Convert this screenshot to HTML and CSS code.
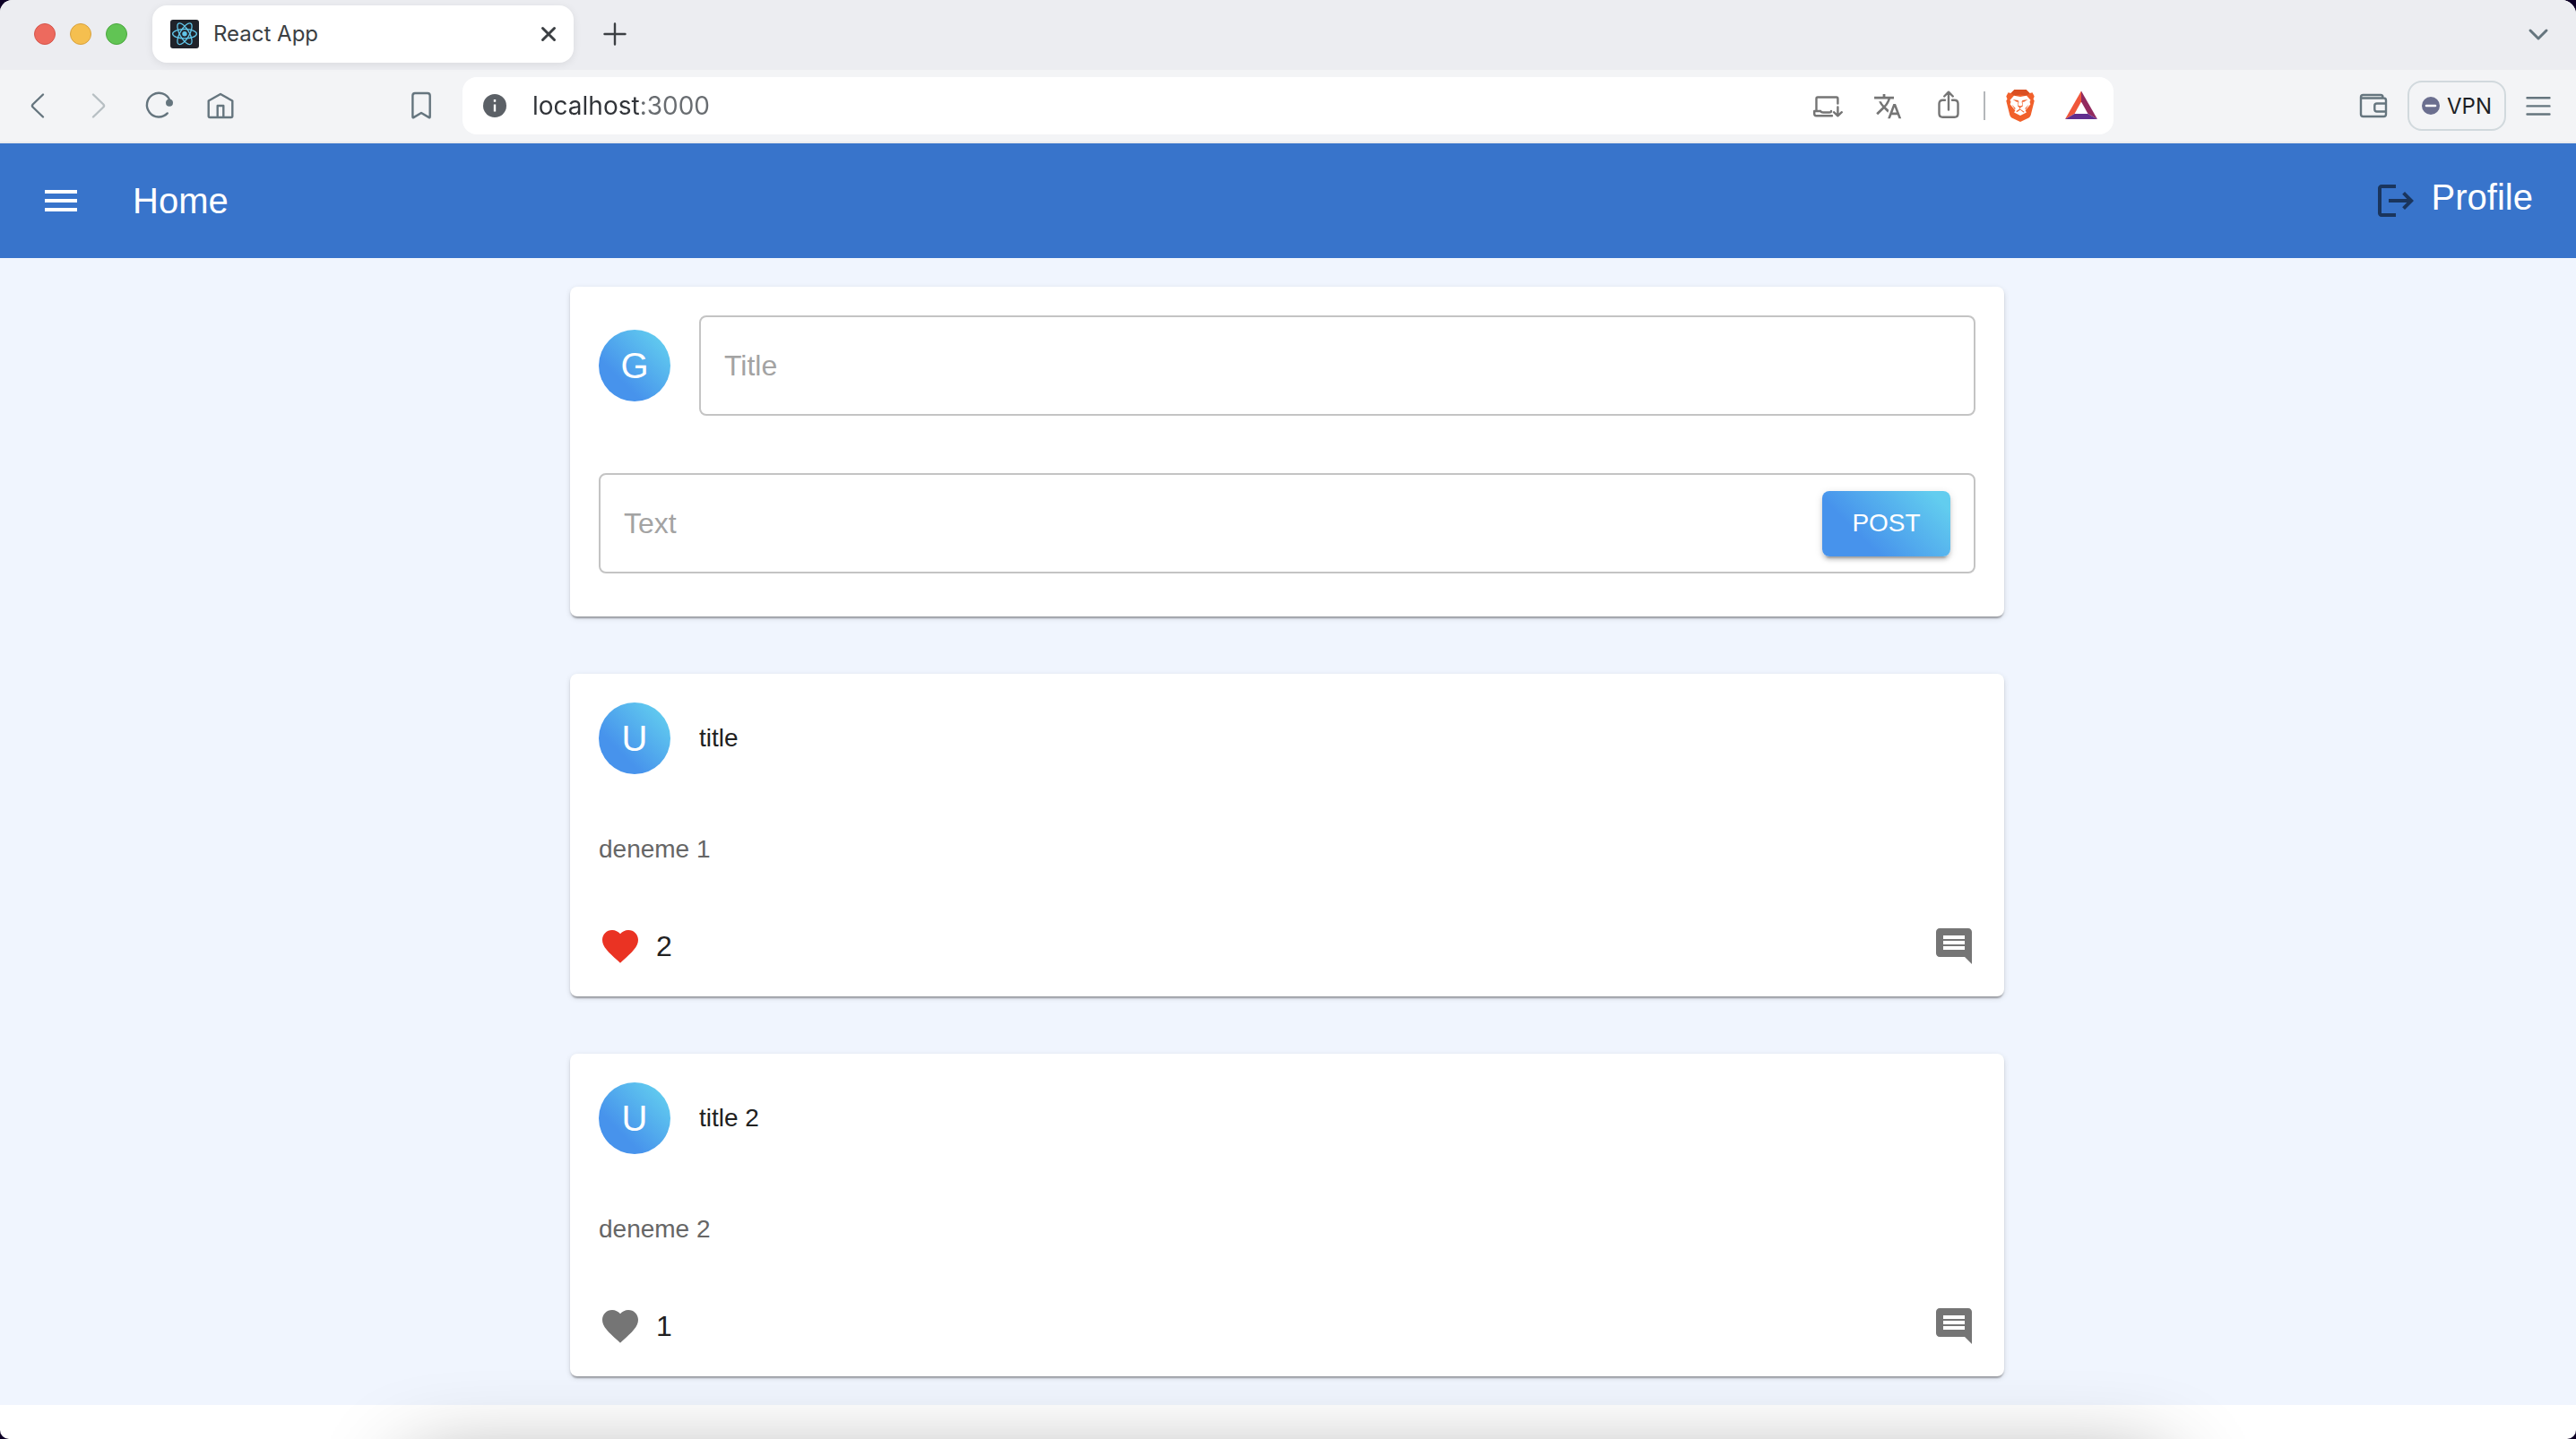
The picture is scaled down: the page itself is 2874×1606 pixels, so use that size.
FILE: index.html
```html
<!DOCTYPE html>
<html lang="en">
<head>
<meta charset="utf-8">
<title>React App</title>
<link rel="stylesheet" href="styles.css">
</head>
<body>
<div class="window">
  <div class="tab-strip">
    <div class="traffic">
      <button class="light light-close" type="button" aria-label="Close window"></button>
      <button class="light light-min" type="button" aria-label="Minimize window"></button>
      <button class="light light-max" type="button" aria-label="Zoom window"></button>
    </div>
    <div class="tab">
      <svg class="favicon" viewBox="0 0 32 32" aria-hidden="true">
        <rect width="32" height="32" rx="3" fill="#20232a"/>
        <g fill="none" stroke="#61c5e8" stroke-width="1.3">
          <ellipse cx="16" cy="15.7" rx="13.4" ry="5.2"/>
          <ellipse cx="16" cy="15.7" rx="13.4" ry="5.2" transform="rotate(60 16 15.7)"/>
          <ellipse cx="16" cy="15.7" rx="13.4" ry="5.2" transform="rotate(120 16 15.7)"/>
        </g>
        <circle cx="16" cy="15.7" r="2.7" fill="#61c5e8"/>
      </svg>
      <span class="tab-title">React App</span>
      <button class="tab-close" type="button" aria-label="Close tab">
        <svg class="glyph glyph-bold" viewBox="0 0 36 36"><path d="M11.5 11.5l13 13M24.5 11.5l-13 13"/></svg>
      </button>
    </div>
    <button class="new-tab" type="button" aria-label="New tab">
      <svg class="glyph" viewBox="0 0 36 36"><path d="M18 6.500v23M6.500 18h23"/></svg>
    </button>
    <button class="tool tab-list" type="button" aria-label="Search tabs">
      <svg class="glyph glyph-bold" viewBox="0 0 36 36"><path d="M9 14l9 9 9-9"/></svg>
    </button>
  </div>

  <div class="toolbar">
    <div class="tools-left">
      <button class="tool" type="button" aria-label="Back">
        <svg class="glyph" viewBox="0 0 36 36"><path d="M24 5.500 12.600 16.500q-1.300 1.500 0 3L24 30.500"/></svg>
      </button>
      <button class="tool tool-off" type="button" aria-label="Forward">
        <svg class="glyph" viewBox="0 0 36 36"><path d="M12 5.500 23.400 16.500q1.300 1.500 0 3L12 30.500"/></svg>
      </button>
      <button class="tool" type="button" aria-label="Reload">
        <svg class="glyph" viewBox="0 0 36 36"><path d="M26.800 26.400A13.300 13.300 0 1 1 29.400 11.800"/><circle cx="29" cy="14.700" r="4" class="solid"/></svg>
      </button>
      <button class="tool" type="button" aria-label="Home page">
        <svg class="glyph" viewBox="0 0 36 36"><path d="M4.700 12.500 18 5l13.300 7.500V29.500q0 1.500-1.500 1.500H6.200q-1.500 0-1.500-1.500zM14.700 31V18h6.600v13"/></svg>
      </button>
      <button class="tool tool-bookmark" type="button" aria-label="Bookmark">
        <svg class="glyph" viewBox="0 0 36 36"><path d="M11 4h14q2.700 0 2.700 2.700V30.500q0 1.200-1 .600L18 26l-8.600 5.100q-1 .600-1-.600V6.700Q8.400 4 11 4z"/></svg>
      </button>
    </div>

    <div class="address">
      <svg class="info" viewBox="0 0 28 28" aria-hidden="true"><circle cx="14" cy="14" r="13" fill="#5b6066"/><path d="M14 12.500v8M14 7v2.800" stroke="#fff" stroke-width="2.400"/></svg>
      <input class="url" type="text" value="localhost:3000" aria-label="Address">
      <button class="tool tool-gray" type="button" aria-label="Install app">
        <svg class="glyph" viewBox="0 0 36 36"><path d="M30.400 15.500V10q0-1.500-1.500-1.500H8q-1.500 0-1.500 1.500V23.500M11 24H4.200V27q0 2.200 2.200 2.200H24M11 24q1 1.500 3 1.500h7q2 0 2-1.500M30.400 19.500v9.500M26 25.200l4.400 4.100 4.400-4.100"/></svg>
      </button>
      <button class="tool tool-gray" type="button" aria-label="Translate">
        <svg class="glyph" viewBox="0 0 36 36"><path class="solid" transform="translate(1.700 2.200) scale(1.370)" d="M12.870 15.070l-2.540-2.510.030-.030c1.740-1.940 2.980-4.170 3.710-6.530H17V4h-7V2H8v2H1v1.990h11.170C11.500 7.920 10.440 9.750 9 11.350 8.070 10.320 7.300 9.190 6.690 8h-2c.730 1.630 1.730 3.170 2.980 4.560l-5.090 5.020L4 19l5-5 3.110 3.110.760-2.040zM18.500 10h-2L12 22h2l1.120-3h4.750L21 22h2l-4.500-12zm-2.620 7l1.620-4.330L19.120 17h-3.240z"/></svg>
      </button>
      <button class="tool tool-gray" type="button" aria-label="Share">
        <svg class="glyph" viewBox="0 0 36 36"><path d="M14 11.800h-2.500q-4 0-4 4v10.900q0 4 4 4h13q4 0 4-4V15.800q0-4-4-4H22M18 22.500V3M13.200 7.500 18 2.700l4.800 4.800"/></svg>
      </button>
      <span class="divider"></span>
      <button class="tool" type="button" aria-label="Brave Shields">
        <svg class="logo" viewBox="0 0 36 36">
          <path fill="#f1602b" d="M11.500 0h13l4 4 3-.800 2.200 4.300-1.200 3 1.200 2-4 16q-.600 2-2.200 3.100L18 36 8.500 31.600Q6.900 30.500 6.300 28.500l-4-16 1.200-2-1.200-3L4.500 3.200l3 .800z"/>
          <path fill="#da4f22" d="M11.500 0h13l4 4-4 3-6.500-1.500L11.500 7l-4-3z"/>
          <path fill="#fff" d="M11 6.800l7 1.100 7-1.100 4.500 5-1 2 .900 2.500-5 6.200-.900.500 1.400 2.400L18 29l-6.900-3.600 1.400-2.400-.900-.500-5-6.200.900-2.500-1-2z"/>
          <path fill="#f1602b" d="M9.500 11l6 .900.900 1.500-.700 4.200 2.300.8 2.300-.8-.7-4.200.900-1.500 6-.900-4.500 2.800-1.500-.300.300 5-2.800 1.700v1.500l4.800 3.200-1.300.700L18 22.500l-3.500 2.400-1.300-.7 4.800-3.200h-.800v-.8l-2-1.700.300-5-1.500.300zM8.500 16.500l4.200 4.500-.8 1.200z M27.500 16.500l-4.200 4.500.8 1.200z"/>
        </svg>
      </button>
      <button class="tool" type="button" aria-label="Brave Rewards">
        <svg class="logo" viewBox="0 0 36 36"><path fill="#f0573a" d="M18 1.500 0 33l10.500-6L18 13.500z"/><path fill="#922a5e" d="M18 1.500 36 33l-10.500-6L18 13.500z"/><path fill="#612e8e" d="M0 33h36l-10.500-6h-15z"/></svg>
      </button>
    </div>

    <div class="tools-right">
      <button class="tool" type="button" aria-label="Wallet">
        <svg class="glyph" viewBox="0 0 36 36"><path d="M4 8.500Q4 6 6.500 6H26q2.500 0 2.500 2.500v1H6.500Q4 9.500 4 8.500zV27.500Q4 30 6.500 30h23Q32 30 32 27.500V12q0-2.500-2.500-2.500M32 15.500H21.800q-2.500 0-2.500 2.500v4q0 2.500 2.500 2.500H32"/></svg>
      </button>
      <button class="vpn" type="button">
        <svg class="vpn-dot" viewBox="0 0 20 20" aria-hidden="true"><circle cx="10" cy="10" r="10" fill="#6b6f8f"/><path d="M5 10h10" stroke="#fff" stroke-width="2.600" stroke-linecap="round"/></svg>
        <span>VPN</span>
      </button>
      <button class="tool" type="button" aria-label="Menu">
        <svg class="glyph" viewBox="0 0 36 36"><path d="M5.500 9.300h25M5.500 18.400h25M5.500 27.500h25"/></svg>
      </button>
    </div>
  </div>

  <header class="app-bar">
    <button class="icon-button" type="button" aria-label="Open navigation">
      <svg class="icon icon-white" viewBox="0 0 24 24"><path d="M3 18h18v-2H3v2zm0-5h18v-2H3v2zm0-7v2h18V6H3z"/></svg>
    </button>
    <a class="bar-link" href="#home">Home</a>
    <div class="account">
      <button class="icon-button" type="button" aria-label="Log out">
        <svg class="icon icon-shade" viewBox="0 0 24 24"><path d="m17 7-1.410 1.410L18.170 11H8v2h10.170l-2.580 2.580L17 17l5-5zM4 5h8V3H4c-1.100 0-2 .9-2 2v14c0 1.100.9 2 2 2h8v-2H4V5z"/></svg>
      </button>
      <a class="bar-link" href="#profile">Profile</a>
    </div>
  </header>

  <main class="feed">
    <form class="card composer">
      <div class="composer-row">
        <span class="avatar">G</span>
        <div class="field"><input class="field-input" type="text" placeholder="Title" aria-label="Title"></div>
      </div>
      <div class="field">
        <input class="field-input" type="text" placeholder="Text" aria-label="Text">
        <button class="post-button" type="button">POST</button>
      </div>
    </form>

    <article class="card post">
      <div class="post-header"><span class="avatar">U</span><h2 class="post-title">title</h2></div>
      <p class="post-text">deneme 1</p>
      <div class="post-actions">
        <button class="icon-button" type="button" aria-label="Unlike">
          <svg class="icon icon-liked" viewBox="0 0 24 24"><path d="M12 21.350l-1.450-1.320C5.400 15.360 2 12.280 2 8.500 2 5.420 4.420 3 7.500 3c1.740 0 3.410.81 4.500 2.090C13.090 3.810 14.760 3 16.500 3 19.580 3 22 5.420 22 8.500c0 3.780-3.400 6.860-8.550 11.540L12 21.350z"/></svg>
        </button>
        <span class="likes">2</span>
        <button class="icon-button comments" type="button" aria-label="Comments">
          <svg class="icon" viewBox="0 0 24 24"><path d="M21.990 4c0-1.100-.89-2-1.990-2H4c-1.100 0-2 .9-2 2v12c0 1.100.9 2 2 2h14l4 4-.01-18zM18 14H6v-2h12v2zm0-3H6V9h12v2zm0-3H6V6h12v2z"/></svg>
        </button>
      </div>
    </article>

    <article class="card post">
      <div class="post-header"><span class="avatar">U</span><h2 class="post-title">title 2</h2></div>
      <p class="post-text">deneme 2</p>
      <div class="post-actions">
        <button class="icon-button" type="button" aria-label="Like">
          <svg class="icon" viewBox="0 0 24 24"><path d="M12 21.350l-1.450-1.320C5.400 15.360 2 12.280 2 8.500 2 5.420 4.420 3 7.500 3c1.740 0 3.410.81 4.500 2.090C13.090 3.810 14.760 3 16.500 3 19.580 3 22 5.420 22 8.500c0 3.780-3.400 6.860-8.550 11.540L12 21.350z"/></svg>
        </button>
        <span class="likes">1</span>
        <button class="icon-button comments" type="button" aria-label="Comments">
          <svg class="icon" viewBox="0 0 24 24"><path d="M21.990 4c0-1.100-.89-2-1.990-2H4c-1.100 0-2 .9-2 2v12c0 1.100.9 2 2 2h14l4 4-.01-18zM18 14H6v-2h12v2zm0-3H6V9h12v2zm0-3H6V6h12v2z"/></svg>
        </button>
      </div>
    </article>
  </main>
  <div class="dock-shadow"></div>
</div>
</body>
</html>
```

FILE: styles.css
```css
* { box-sizing: border-box; }

html { background: #0d0126; }

body {
  margin: 0;
  font-family: "Liberation Sans", Arial, sans-serif;
  color: #212121;
}

button {
  margin: 0;
  padding: 0;
  border: 0;
  background: none;
  font: inherit;
  cursor: pointer;
}

svg { display: block; flex: none; }

.window {
  position: relative;
  min-height: 100vh;
  overflow: hidden;
  border-radius: 14px 16px 10px 10px;
  background: #fff;
}

/* Browser chrome */

.tab-strip {
  display: flex;
  align-items: center;
  height: 78px;
  padding: 0 8px 2px 38px;
  background: #ecedf1;
  font-family: Inter, sans-serif;
}

.traffic { display: flex; gap: 16px; margin-right: 28px; }

.light { width: 24px; height: 24px; border: 1px solid; border-radius: 50%; }
.light-close { background: #ed6a5e; border-color: #d5554b; }
.light-min { background: #f5bf4f; border-color: #d8a240; }
.light-max { background: #61c454; border-color: #4ba73f; }

.tab {
  display: flex;
  align-items: center;
  width: 470px;
  height: 64px;
  padding: 0 10px 0 20px;
  border-radius: 16px;
  background: #fff;
  box-shadow: 0 2px 10px rgba(0, 0, 0, .08);
}

.favicon { width: 32px; height: 32px; }

.tab-title {
  flex: 1;
  padding-left: 16px;
  font-size: 24px;
  line-height: 32px;
  color: #3b3f43;
}

.tab-close, .new-tab { color: #3b3f43; }
.new-tab { margin-left: 28px; }
.tab-list { margin-left: auto; }

.glyph {
  width: 36px;
  height: 36px;
  fill: none;
  stroke: currentColor;
  stroke-width: 2.4px;
  stroke-linecap: round;
  stroke-linejoin: round;
}
.glyph-bold { stroke-width: 3px; }
.glyph .solid { fill: currentColor; stroke: none; }

.logo { width: 36px; height: 36px; }

.toolbar {
  display: grid;
  grid-template-columns: 516px 1fr 516px;
  align-items: center;
  height: 82px;
  border-bottom: 2px solid #e9ebee;
  background: #f3f4f6;
  font-family: Inter, sans-serif;
}

.tool {
  display: flex;
  align-items: center;
  justify-content: center;
  width: 68px;
  height: 56px;
  color: #65757e;
}
.tool-off { color: #b7bfc3; }
.tool-gray { color: #757575; }

.tools-left { display: flex; padding: 0 12px 0 8px; }
.tool-bookmark { margin-left: auto; }

.address {
  display: flex;
  align-items: center;
  height: 64px;
  padding: 0 2px 0 22px;
  border-radius: 16px;
  background: #fff;
}

.info { width: 28px; height: 28px; }

/* The host is darker than the port that follows it. */
.url {
  flex: 1;
  min-width: 0;
  margin-left: 28px;
  padding: 0;
  border: 0;
  outline: 0;
  font: 28px/40px Inter, sans-serif;
  color: transparent;
  background: linear-gradient(90deg, #303338 122px, #686c70 122px);
  -webkit-background-clip: text;
  background-clip: text;
}

.divider { width: 2px; height: 32px; margin: 0 5px; background: #b4b7ba; }

.tools-right {
  display: flex;
  align-items: center;
  justify-content: flex-end;
  padding-right: 8px;
}

.vpn {
  display: flex;
  align-items: center;
  justify-content: center;
  gap: 8px;
  width: 110px;
  height: 56px;
  margin: 0 2px 0 4px;
  border: 2px solid #d1d9dd;
  border-radius: 16px;
  font-size: 24px;
  color: #1d1f25;
}
.vpn-dot { width: 20px; height: 20px; }

/* Application */

.app-bar {
  display: flex;
  align-items: center;
  height: 128px;
  padding: 0 48px 0 44px;
  background: #3874cb;
}

.icon-button { display: flex; }

.icon { width: 48px; height: 48px; fill: #757575; }
.icon-white { fill: #fff; }
.icon-shade { fill: #1a355d; }
.icon-liked { fill: #ea3323; }

.bar-link { font-size: 40px; line-height: 40px; color: #fff; text-decoration: none; }
.app-bar > .bar-link { margin-left: 56px; }

.account {
  display: flex;
  align-items: flex-start;
  gap: 16px;
  margin-left: auto;
}

.feed {
  display: flex;
  flex-direction: column;
  align-items: center;
  gap: 64px;
  padding: 32px 34px 32px 32px;
  background: #f0f5fe;
}

.card {
  width: 100%;
  max-width: 1600px;
  border-radius: 8px;
  background: #fff;
  box-shadow: 0 4px 2px -2px rgba(0, 0, 0, .2), 0 2px 2px rgba(0, 0, 0, .14), 0 2px 6px rgba(0, 0, 0, .12);
}

.composer {
  display: flex;
  flex-direction: column;
  gap: 64px;
  padding: 32px 32px 48px;
}

.composer-row, .post-header { display: flex; align-items: center; gap: 32px; }

.avatar {
  flex: none;
  width: 80px;
  height: 80px;
  border-radius: 50%;
  background: linear-gradient(45deg, #4793ec 30%, #62cdef 90%);
  font-size: 40px;
  line-height: 80px;
  text-align: center;
  color: #fff;
}

.field {
  display: flex;
  align-items: center;
  flex: 1;
  height: 112px;
  min-height: 112px;
  padding: 0 26px;
  border: 2px solid #c4c4c4;
  border-radius: 8px;
}

.field-input {
  flex: 1;
  min-width: 0;
  height: 48px;
  padding: 0;
  border: 0;
  outline: 0;
  background: none;
  font: 32px/48px "Liberation Sans", Arial, sans-serif;
  color: #212121;
}
.field-input::placeholder { color: #a3a3a3; opacity: 1; }

.post-button {
  width: 143px;
  height: 73px;
  border-radius: 8px;
  background: linear-gradient(45deg, #4793ec 30%, #62cdef 90%);
  box-shadow: 0 6px 2px -4px rgba(0, 0, 0, .2), 0 4px 4px rgba(0, 0, 0, .14), 0 2px 10px rgba(0, 0, 0, .12);
  font-size: 28px;
  color: #fff;
}

.post { padding: 32px; }

.post-title { margin: 0; font-size: 28px; font-weight: 400; line-height: 40px; }

.post-text { margin: 64px 0; font-size: 28px; line-height: 40px; color: #666; }

.post-actions { display: flex; align-items: center; gap: 16px; }
.likes { font-size: 32px; line-height: 48px; }
.comments { margin-left: auto; }

/* Soft shade cast onto the window's lower edge */
.dock-shadow {
  position: absolute;
  right: 16%;
  bottom: -134px;
  left: 16%;
  height: 100px;
  box-shadow: 0 0 100px rgba(0, 0, 0, .45);
  pointer-events: none;
}
```
